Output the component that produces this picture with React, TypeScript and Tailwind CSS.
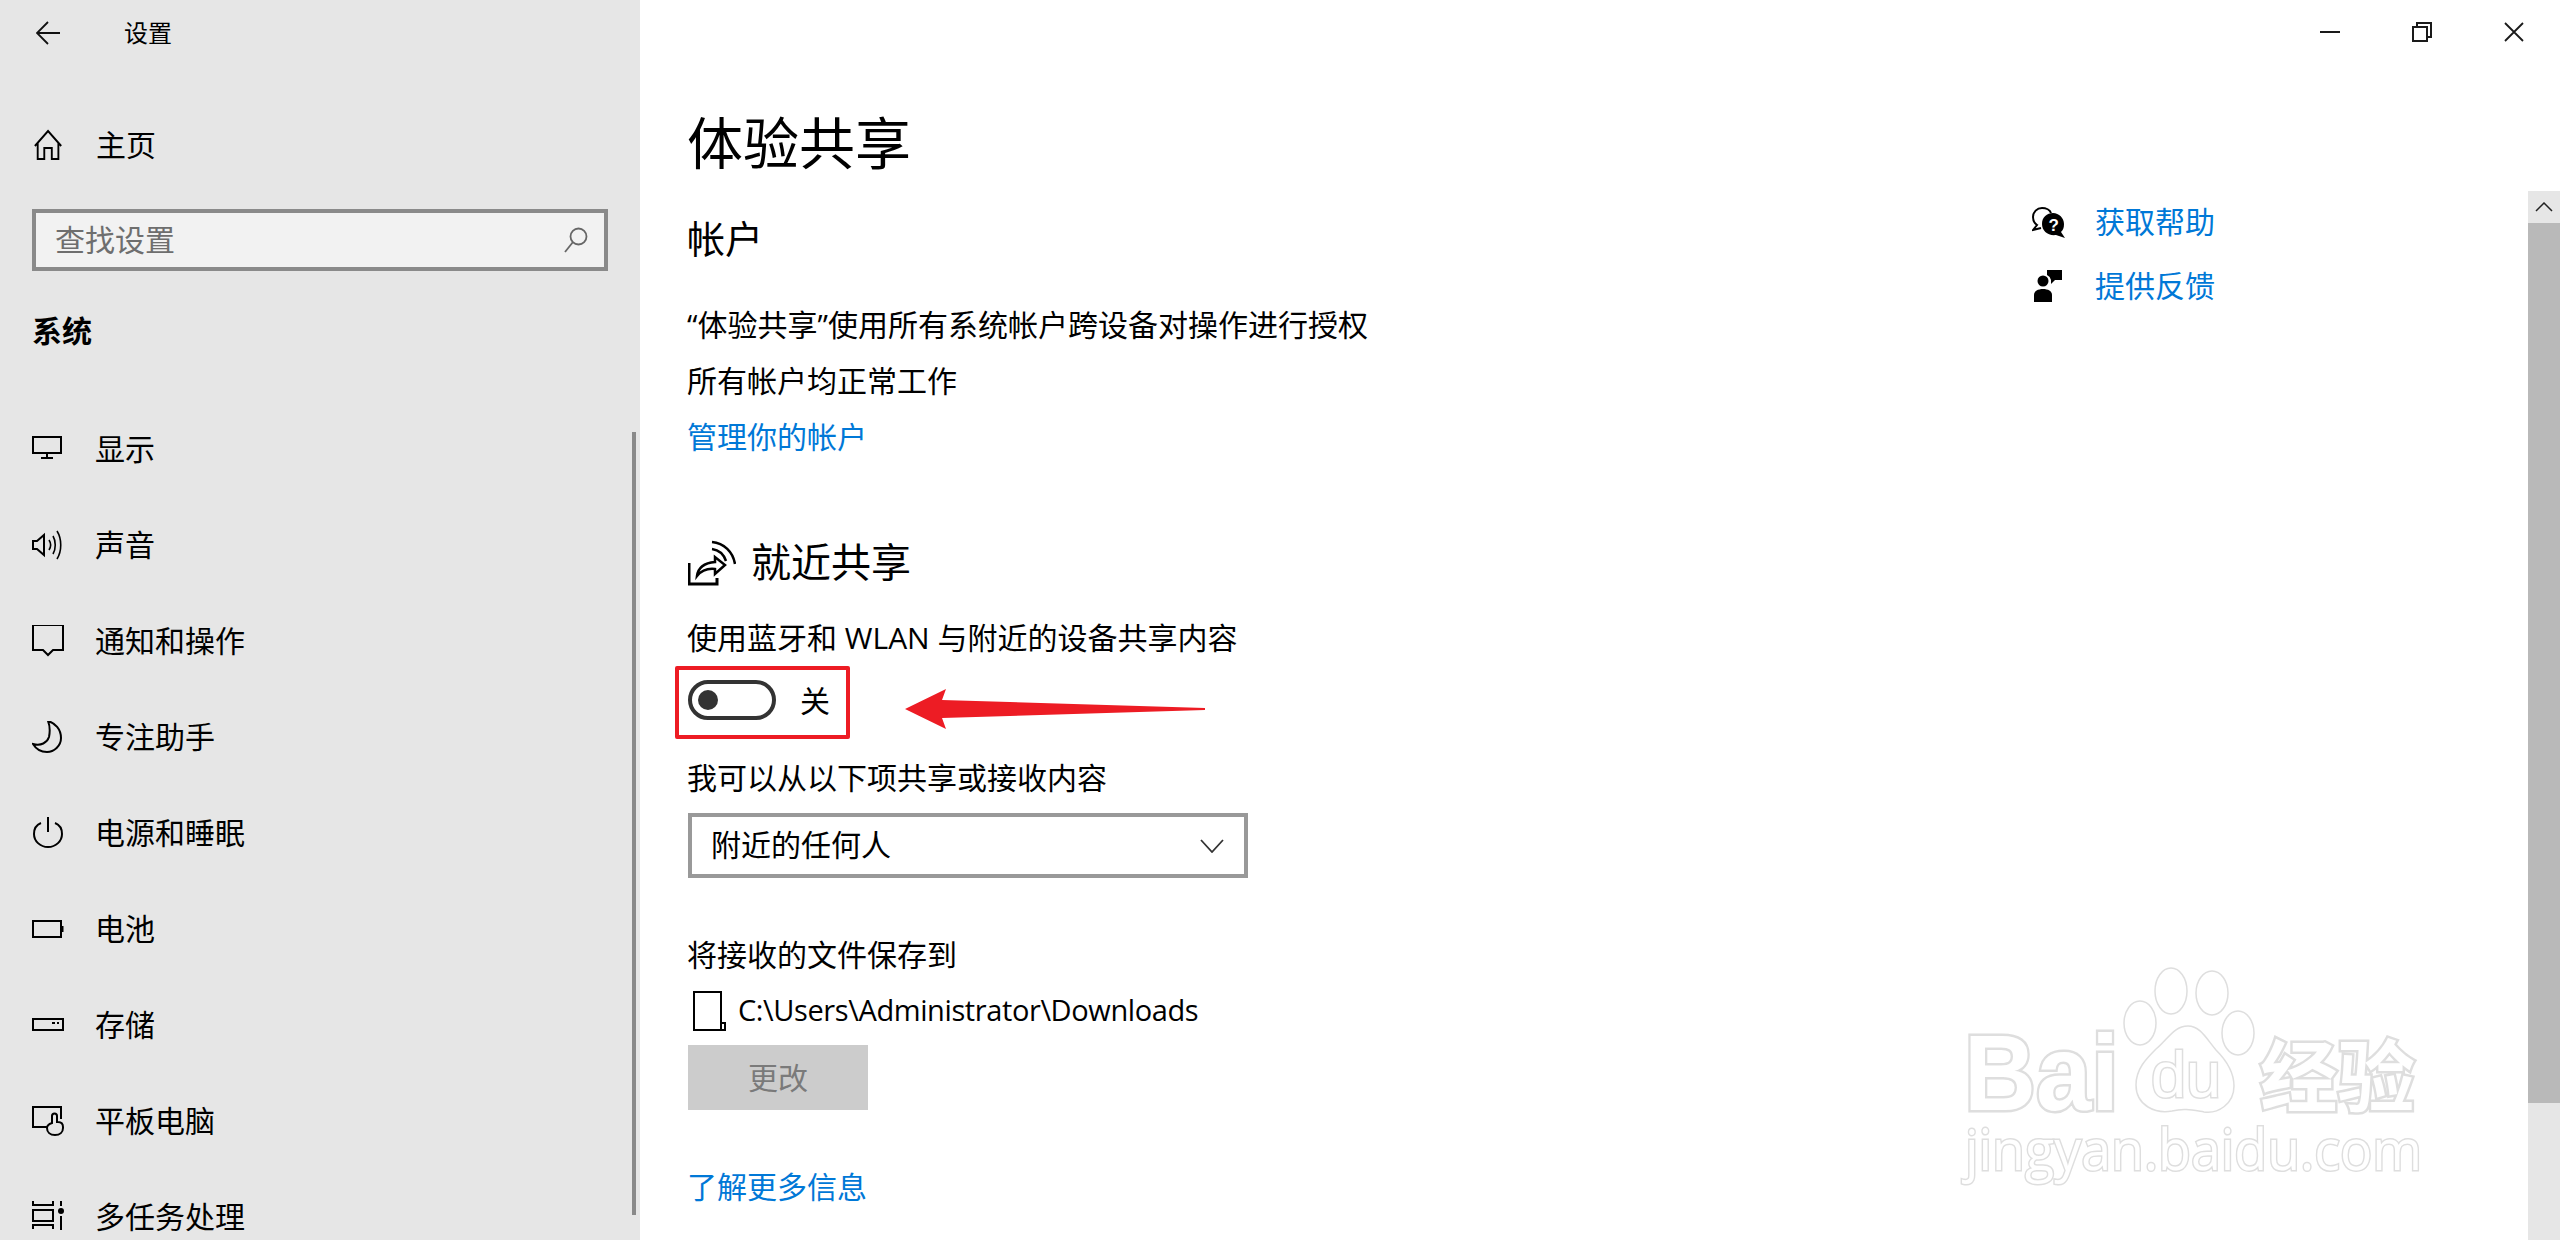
import type { ReactNode } from "react";

function Icon({ children, size = 32 }: { children: ReactNode; size?: number }) {
  return (
    <svg width={size} height={size} viewBox={`0 0 ${size} ${size}`} fill="none" stroke="#000" strokeWidth="2" className="shrink-0">
      {children}
    </svg>
  );
}

const navItems: { label: string; icon: ReactNode }[] = [
  {
    label: "显示",
    icon: (
      <>
        <rect x="1" y="4" width="28" height="16" />
        <path d="M15 20v5M9 25h12" />
      </>
    ),
  },
  {
    label: "声音",
    icon: (
      <>
        <path d="M1 12h4l7-6v20l-7-6H1z" />
        <path d="M17 11c2 3 2 7 0 10M21 7c3 5 3 13 0 18M25 2c5 8 5 20 0 28" strokeWidth="1.6" />
      </>
    ),
  },
  {
    label: "通知和操作",
    icon: <path d="M1 0h30v25H21l-5 5-5-5H1z" />,
  },
  {
    label: "专注助手",
    icon: <path d="M16 0c7 2 13 8 13 17 0 8-7 14-14 14-6 0-11-3-14-8 8 2 14-1 16-7 1-5 1-11-1-16z" />,
  },
  {
    label: "电源和睡眠",
    icon: (
      <>
        <path d="M9 6C4 8 2 12 2 17c0 7 6 13 14 13s14-6 14-13c0-5-2-9-7-11" />
        <path d="M16 0v15" />
      </>
    ),
  },
  {
    label: "电池",
    icon: (
      <>
        <rect x="1" y="8" width="28" height="16" />
        <path d="M30 13v6" strokeWidth="3" />
      </>
    ),
  },
  {
    label: "存储",
    icon: (
      <>
        <rect x="1" y="10" width="30" height="11" />
        <path d="M20 14h3M25 14h2" />
      </>
    ),
  },
  {
    label: "平板电脑",
    icon: (
      <>
        <path d="M15 22H1V2h28v12" />
        <path d="M20 18v-7a2.500 2.500 0 0 1 5 0v6h1c3 0 5 2 5 5v1c0 4-3 7-8 7s-8-3-8-7c0-2 2-4 5-5z" />
      </>
    ),
  },
  {
    label: "多任务处理",
    icon: (
      <>
        <path d="M1 0v4h20V0M1 28v-4h20v4" />
        <rect x="1" y="9" width="20" height="11" />
        <path d="M29 0v5M29 15v14" />
        <circle cx="29" cy="10" r="3" fill="#000" stroke="none" />
      </>
    ),
  },
];

export default function App() {
  return (
    <div className="flex h-[1240px] w-full overflow-hidden bg-white font-['Open_Sans','Noto_Sans_CJK_SC',sans-serif] text-[30px] text-black">
      {/* Sidebar */}
      <aside className="relative h-full w-[640px] shrink-0 overflow-hidden bg-[#e6e6e6]">
        <div className="flex h-[66px] items-center pl-9">
          <svg width="24" height="24" viewBox="0 0 24 24" fill="none" stroke="#111" strokeWidth="1.800">
            <path d="M24 12H1M12 1 1 12l11 11" />
          </svg>
          <span className="ml-[64px] text-2xl">设置</span>
        </div>
        <div className="mt-[31px] flex h-24 items-center pl-8">
          <Icon>
            <path d="M2 17 16 2l14 15M5 14v16h7V19h8v11h7V14" transform="translate(1 0) scale(.94 1)" />
          </Icon>
          <span className="ml-8 pb-[2px]">主页</span>
        </div>
        <div className="mx-8 mt-4 flex h-[62px] items-center justify-between border-4 border-[#8a8a8a] bg-[#f2f2f2] pr-4 pl-[19px]">
          <span className="pb-[2px] text-[#6e6e6e]">查找设置</span>
          <svg width="24" height="26" viewBox="0 0 24 26" fill="none" stroke="#666" strokeWidth="1.800">
            <circle cx="14.500" cy="9.500" r="8" />
            <path d="M9 15 1 25" />
          </svg>
        </div>
        <div className="mt-9 pl-8 font-bold leading-[48px]">系统</div>
        <nav className="mt-[46px]">
          {navItems.map((item) => (
            <div key={item.label} className="flex h-24 items-center pl-8">
              <Icon>{item.icon}</Icon>
              <span className="ml-[31px] pb-[2px]">{item.label}</span>
            </div>
          ))}
        </nav>
        <div className="absolute top-[432px] left-[632px] h-[783px] w-1 bg-[#8a8a8a]" />
      </aside>

      {/* Main */}
      <main className="relative flex h-full flex-1 flex-col">
        <div className="flex h-16 shrink-0 justify-end">
          <div className="flex w-[92px] items-center justify-center">
            <div className="h-0.5 w-5 bg-[#1a1a1a]" />
          </div>
          <div className="flex w-[92px] items-center justify-center">
            <svg width="20" height="20" viewBox="0 0 20 20" fill="none" stroke="#1a1a1a" strokeWidth="2">
              <rect x="1" y="5" width="14" height="14" />
              <path d="M5 5V1h14v14h-4" />
            </svg>
          </div>
          <div className="flex w-[92px] items-center justify-center">
            <svg width="20" height="20" viewBox="0 0 20 20" fill="none" stroke="#1a1a1a" strokeWidth="1.800">
              <path d="m1 1 18 18M19 1 1 19" />
            </svg>
          </div>
        </div>

        <div className="flex min-h-0 flex-1">
          <section className="w-[1392px] shrink-0 pt-10 pl-12">
            <h1 className="-ml-px text-[56px] leading-[76px]">体验共享</h1>
            <h2 className="mt-8 -ml-px text-[38px] leading-[52px]">帐户</h2>
            <p className="mt-[33px] -ml-px leading-[56px]">“体验共享”使用所有系统帐户跨设备对操作进行授权</p>
            <p className="-ml-px leading-[56px]">所有帐户均正常工作</p>
            <p className="-ml-px leading-[56px] text-[#0078d7]">管理你的帐户</p>

            <div className="mt-[70px] flex h-14 items-center">
              <svg width="48" height="46" viewBox="0 0 48 46" fill="none" stroke="#000" strokeWidth="2">
                <path d="M1 23v21h28v-6" strokeWidth="3" />
                <path d="M9 36c1-8 7-13 18-14v-5l10 8-10 9v-5c-9-1-14 2-18 7z" strokeWidth="2.500" />
                <path d="M24 9c7 1 12 6 14 12M24 2c12 1 21 10 23 22" strokeWidth="2.500" />
              </svg>
              <span className="ml-[15px] pb-[2px] text-[40px]">就近共享</span>
            </div>
            <p className="mt-6 -ml-px h-12 leading-[46px]">使用蓝牙和 WLAN 与附近的设备共享内容</p>

            <div className="relative mt-[17px] flex h-10 items-center">
              <div className="flex h-10 w-[88px] items-center rounded-full border-4 border-[#333] pl-[6px]">
                <div className="size-5 rounded-full bg-[#333]" />
              </div>
              <span className="ml-6">关</span>
              <div className="absolute -top-[14px] -left-[13px] h-[73px] w-[175px] rounded-[2px] border-4 border-[#ed1c24]" />
              <svg width="302" height="44" viewBox="0 0 302 44" className="absolute top-[7px] left-[216px]">
                <path d="M1 22 42 2l-4 11 263 8v2L38 31l4 11z" fill="#ed1c24" />
              </svg>
            </div>

            <p className="mt-[35px] -ml-px h-12 leading-[46px]">我可以从以下项共享或接收内容</p>
            <div className="mt-[10px] flex h-[65px] w-[560px] items-center justify-between border-4 border-[#999] pr-5 pl-5">
              <span className="-ml-px pb-[2px]">附近的任何人</span>
              <svg width="24" height="14" viewBox="0 0 24 14" fill="none" stroke="#333" strokeWidth="1.800">
                <path d="m1 1 11 12L23 1" />
              </svg>
            </div>

            <p className="mt-[53px] -ml-px leading-[48px]">将接收的文件保存到</p>
            <div className="mt-2 flex h-12 items-center pl-[5px]">
              <svg width="33" height="40" viewBox="0 0 33 40" fill="none" stroke="#000" strokeWidth="2">
                <path d="M1 1h27v38H1zM28 32h4v7h-4" />
              </svg>
              <span className="ml-[12px] pb-[2px] text-[29px] tracking-[-0.4px]">C:\Users\Administrator\Downloads</span>
            </div>
            <div className="mt-[10px] flex h-[65px] w-[180px] items-center justify-center bg-[#cccccc] text-[#7a7a7a]">更改</div>
            <p className="mt-[53px] -ml-px leading-[48px] text-[#0078d7]">了解更多信息</p>
          </section>

          <section className="w-[496px] shrink-0 pt-[126px]">
            <div className="flex h-16 items-center">
              <svg width="34" height="32" viewBox="0 0 34 32">
                <path d="M10 2c-5 0-9 4-9 9 0 3 1 6 4 8l-4 5 8-2" fill="none" stroke="#000" strokeWidth="2" />
                <path d="M10 2c4 0 8 2 9 5" fill="none" stroke="#000" strokeWidth="2" />
                <path d="M21 7c6 0 11 5 11 11 0 4-1 6-3 8l4 6-9-3c-8 1-14-4-14-11S15 7 21 7z" fill="#000" />
                <text x="16.500" y="25" fontSize="17" fontWeight="700" fill="#fff" fontFamily="Liberation Sans">?</text>
              </svg>
              <span className="ml-[29px] pb-[2px] text-[#0078d7]">获取帮助</span>
            </div>
            <div className="flex h-16 items-center">
              <svg width="34" height="32" viewBox="0 0 34 32" className="ml-[1px]">
                <circle cx="10" cy="11" r="5.500" fill="#000" />
                <path d="M1 32v-7c0-4 4-6 9-6s9 2 9 6v7z" fill="#000" />
                <path d="M14 0h15v10h-7l-4 4v-4a7 7 0 0 0-4-5z" fill="#000" />
              </svg>
              <span className="ml-[28px] pb-[2px] text-[#0078d7]">提供反馈</span>
            </div>
          </section>

          <div className="mt-[127px] flex w-8 shrink-0 flex-col bg-[#e6e6e6]">
            <div className="flex h-8 items-center justify-center">
              <svg width="18" height="10" viewBox="0 0 18 10" fill="none" stroke="#222" strokeWidth="1.500">
                <path d="m1 9 8-8 8 8" />
              </svg>
            </div>
            <div className="h-[880px] bg-[#b9b9b9]" />
          </div>
        </div>

        {/* Watermark */}
        <svg width="490" height="240" viewBox="0 0 490 240" className="absolute top-[960px] left-[1310px]" fill="#fff" stroke="#dedede" strokeWidth="1.500">
          <ellipse cx="221" cy="31" rx="16" ry="23" />
          <ellipse cx="262" cy="33" rx="16" ry="22" />
          <ellipse cx="190" cy="63" rx="16" ry="22" />
          <ellipse cx="288" cy="73" rx="16" ry="22" />
          <path d="M238 66c12 0 18 12 28 24 10 10 18 22 18 36 0 18-16 28-30 26-12-2-20-4-32-1-16 3-36-5-36-26 0-16 10-26 20-36 12-10 18-23 32-23z" />
          <text x="14" y="150" fontSize="108" fontWeight="700" fontFamily="Liberation Sans" textLength="155" lengthAdjust="spacingAndGlyphs" strokeWidth="5" paintOrder="stroke">Bai</text>
          <text x="201" y="137" fontSize="64" fontFamily="Liberation Sans" textLength="70" lengthAdjust="spacingAndGlyphs" strokeWidth="3" paintOrder="stroke">du</text>
          <text x="310" y="146" fontSize="78" fontWeight="700" fontFamily="Noto Sans CJK SC" textLength="155" lengthAdjust="spacingAndGlyphs" strokeWidth="5" paintOrder="stroke">经验</text>
          <text x="15" y="210" fontSize="56" fontFamily="Open Sans" textLength="457" lengthAdjust="spacingAndGlyphs" strokeWidth="3" paintOrder="stroke">jingyan.baidu.com</text>
        </svg>
      </main>
    </div>
  );
}
